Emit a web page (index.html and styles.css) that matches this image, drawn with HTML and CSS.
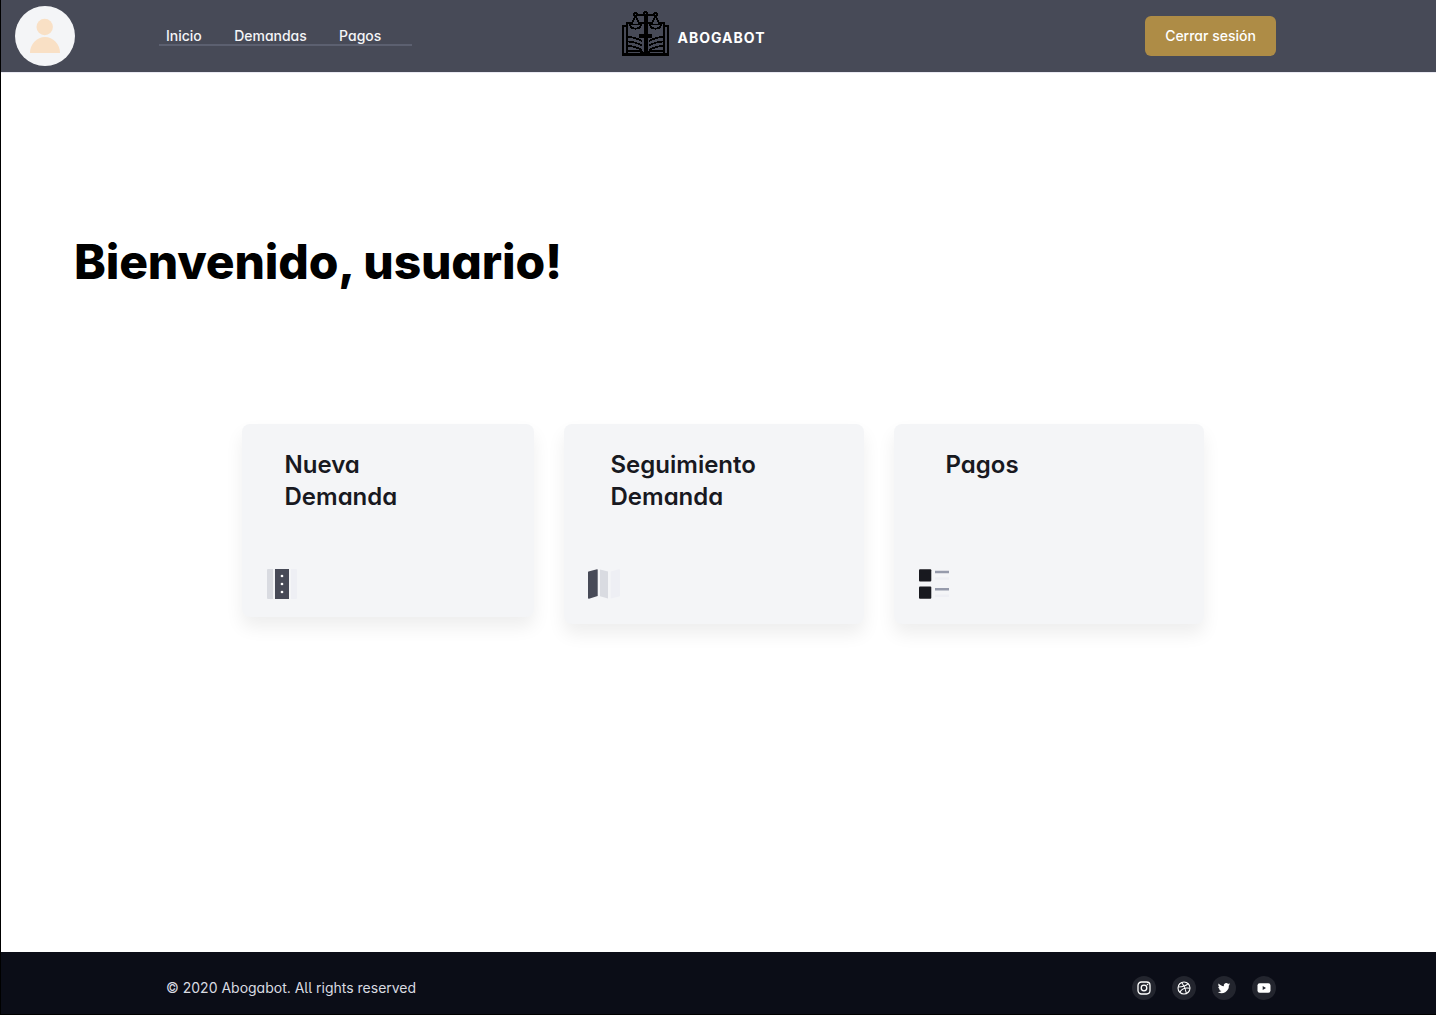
FILE: index.html
```html
<!DOCTYPE html>
<html lang="es">
<head>
<meta charset="utf-8">
<title>Abogabot</title>
<link rel="stylesheet" href="styles.css">
</head>
<body>
<div class="page">
  <header class="topbar">
    <div class="avatar">
      <svg width="60" height="60" viewBox="0 0 60 60" fill="#f9e0c5"><circle cx="29.700" cy="21" r="8.200"/><path d="M15 47a15 16 0 0 1 30 0z"/></svg>
    </div>
    <nav class="nav">
      <a class="nav-link">Inicio</a>
      <a class="nav-link">Demandas</a>
      <a class="nav-link">Pagos</a>
    </nav>
    <div class="brand">
      <svg class="brand-logo" width="48" height="46" viewBox="0 0 48 46" fill="none" stroke="#000" stroke-width="1.600" shape-rendering="crispEdges">
        <path d="M5 15H1V44H46V15H42" stroke-width="2"/>
        <path d="M0 43.500H47" stroke-width="3"/>
        <path d="M5 42V12H9M42 42V12H38M18 12H29" stroke-width="2"/>
        <path d="M5 40.500C12 39 19 39.500 23.500 43C28 39.500 35 39 42 40.500" stroke-width="2"/>
        <path d="M23.500 4V43" stroke-width="4"/>
        <path d="M17 25H30" stroke-width="4"/>
        <path d="M14 4H33" stroke-width="2"/>
        <g fill="#000" stroke="none"><circle cx="13.500" cy="3.500" r="2.500"/><circle cx="33.500" cy="3.500" r="2.500"/><circle cx="23.500" cy="3" r="3"/></g>
        <path d="M13 3H14V4H13ZM33 3H34V4H33ZM23 2H24V3H23Z" fill="#474a57" stroke="none"/>
        <path d="M13.500 5L9.500 13M13.500 5L17.500 13M33.500 5L29.500 13M33.500 5L37.500 13"/>
        <path d="M8 13.500H19C18.500 19 8.500 19 8 13.500ZM28 13.500H39C38.500 19 28.500 19 28 13.500Z" stroke-width="1.800"/>
        <path d="M6 26C12 26 16 28 20 30M6 30.500C12 30.500 16 32.500 20 34.500M6 35C12 35 16 37 20 39M41 26C35 26 31 28 27 30M41 30.500C35 30.500 31 32.500 27 34.500M41 35C35 35 31 37 27 39" stroke-width="1.800"/>
      </svg>
      <span class="brand-name">ABOGABOT</span>
    </div>
    <button class="logout">Cerrar sesión</button>
  </header>

  <main class="main">
    <h1 class="title">Bienvenido, usuario!</h1>
    <section class="cards">
      <article class="card card-new">
        <h2 class="card-title">Nueva<br>Demanda</h2>
        <svg class="card-icon" width="32" height="32" viewBox="0 0 32 32">
          <path d="M2 1H7V31H2Q1 31 1 30V2Q1 1 2 1Z" fill="#d9dbe1"/>
          <path d="M9 1H23V31H9Z" fill="#474a57"/>
          <path d="M25 1H30Q31 1 31 2V30Q31 31 30 31H25Z" fill="#eeeff4"/>
          <circle cx="16" cy="8" r="1.350" fill="#fff"/><circle cx="16" cy="16" r="1.350" fill="#fff"/><circle cx="16" cy="24" r="1.350" fill="#fff"/>
        </svg>
      </article>
      <article class="card card-track">
        <h2 class="card-title">Seguimiento<br>Demanda</h2>
        <svg class="card-icon" width="32" height="32" viewBox="0 0 32 32">
          <path d="M0 4Q0 3.500 .5 3.400L9 1.200Q9.700 1 9.700 1.700V28L1 30.800Q0 31 0 30Z" fill="#474a57"/>
          <path d="M12 1.500L20 3.500V30.500L12 28.300Z" fill="#d9dbe1"/>
          <path d="M22.700 3.500L31 1.200Q32 1 32 2V27.500Q32 28.200 31.300 28.400L22.700 30.500Z" fill="#eeeff4"/>
        </svg>
      </article>
      <article class="card card-pay">
        <h2 class="card-title">Pagos</h2>
        <svg class="card-icon" width="32" height="32" viewBox="0 0 32 32">
          <rect x="1" y="1.200" width="12.300" height="12.200" rx="1" fill="#18191f"/><rect x="1" y="18.600" width="12.300" height="12.200" rx="1" fill="#18191f"/>
          <path d="M17 4H31M17 21.300H31" stroke="#969bab" stroke-width="2.600"/>
          <path d="M17 10.500H31M17 27.800H31" stroke="#eeeff4" stroke-width="2.600"/>
        </svg>
      </article>
    </section>
  </main>

  <footer class="footer">
    <p class="copyright">© 2020 Abogabot. All rights reserved</p>
    <div class="socials">
      <a class="social"><svg width="14" height="14" viewBox="0 0 14 14" fill="none" stroke="#fff" stroke-width="1.300"><rect x="1" y="1" width="12" height="12" rx="3.400"/><circle cx="7" cy="7" r="2.800"/><circle cx="10.500" cy="3.500" r=".8" fill="#fff" stroke="none"/></svg></a>
      <a class="social"><svg width="14" height="14" viewBox="0 0 14 14" fill="none" stroke="#fff" stroke-width="1.100"><circle cx="7" cy="7" r="6"/><path d="M4.700 1.500C7 4.300 8.600 7.600 9.400 12.400M1.100 6C5.500 6 9 5.200 11.100 2.700M2.900 11.300C4.700 7.800 8.300 6.300 12.900 7.300"/></svg></a>
      <a class="social"><svg width="14" height="14" viewBox="0 0 24 24" fill="#fff"><path d="M22.500 5.600c-.8.350-1.600.6-2.500.7.900-.55 1.600-1.400 1.900-2.400-.85.500-1.800.86-2.750 1.050A4.340 4.340 0 0 0 11.700 8.900C8.100 8.700 4.900 7 2.800 4.400c-1.100 2-.6 4.500 1.300 5.800-.7 0-1.400-.2-2-.55 0 2 1.400 3.900 3.500 4.300-.6.170-1.300.2-1.950.07.550 1.750 2.150 2.950 4.050 3A8.700 8.700 0 0 1 1.300 18.800 12.300 12.300 0 0 0 20.300 7.850c.85-.6 1.600-1.350 2.200-2.250z"/></svg></a>
      <a class="social"><svg width="14" height="14" viewBox="0 0 14 14"><rect x=".5" y="2.200" width="13" height="9.600" rx="2.200" fill="#fff"/><path d="M5.700 5V9L9 7z" fill="#23252f"/></svg></a>
    </div>
  </footer>
</div>
</body>
</html>
```

FILE: styles.css
```css
* { box-sizing: border-box; }

body {
  margin: 0;
  background: #fff;
  font-family: Inter, "Liberation Sans", sans-serif;
  font-feature-settings: "cv11", "cv05";
}

.page {
  display: flex;
  flex-direction: column;
  width: 1436px;
  height: 1015px;
  border-left: 1px solid #000;
  border-bottom: 1px solid #000;
  overflow: hidden;
}

.topbar {
  display: flex;
  align-items: center;
  flex: none;
  height: 73px;
  padding: 0 160px 0 14px;
  background: #474a57;
  border-bottom: 1px solid #e9e9f2;
}

.avatar {
  width: 60px;
  height: 60px;
  border-radius: 50%;
  background: #f4f5f7;
}

.avatar svg { display: block; }

.nav {
  display: flex;
  gap: 32.3px;
  width: 253px;
  height: 20px;
  margin: 0 0 0 84px;
  padding-left: 7px;
  border-bottom: 2px solid #5c6070;
}

.nav-link {
  color: #f4f5f7;
  font-size: 14px;
  line-height: 20px;
  font-weight: 500;
}

.brand {
  display: flex;
  align-items: center;
  gap: 7.5px;
  margin-left: 210px;
}

.brand-logo { display: block; margin-top: -4px; }

.brand-name {
  color: #fff;
  font-size: 14px;
  font-weight: 700;
  line-height: 20px;
  letter-spacing: 1px;
  margin-top: 4px;
}

.logout {
  width: 131px;
  height: 40px;
  margin-left: auto;
  padding: 0;
  border: 0;
  border-radius: 6px;
  background: #ae8c46;
  color: #fff;
  font: 500 14px/20px Inter, "Liberation Sans", sans-serif;
  font-feature-settings: inherit;
}

.main { flex: 1; }

.title {
  margin: 157px 0 0 73px;
  font-size: 48px;
  line-height: 64px;
  font-weight: 800;
  letter-spacing: -.16px;
  color: #000;
}

.cards {
  display: flex;
  align-items: flex-start;
  gap: 30px;
  margin: 130px 0 0 241px;
}

.card {
  display: flex;
  flex-direction: column;
  justify-content: space-between;
  border-radius: 8px;
  background: #f4f5f7;
  box-shadow: 0 10px 18px rgba(0, 0, 0, .07);
}

.card-new { width: 292px; height: 193px; padding: 25px 24px 17px; }
.card-track { width: 300px; height: 200px; padding: 25px 24px 24px; }
.card-pay { width: 310px; height: 200px; padding: 25px 24px 24px; }

.card-title {
  margin: 0;
  padding-left: 18.5px;
  color: #18191f;
  font-size: 24px;
  line-height: 32px;
  font-weight: 600;
}

.card-track .card-title { padding-left: 22.5px; }
.card-pay .card-title { padding-left: 27.5px; }

.card-icon { display: block; }

.footer {
  display: flex;
  align-items: center;
  justify-content: space-between;
  flex: none;
  height: 62px;
  padding: 10px 160px 0 165px;
  background: #0b0d17;
}

.copyright {
  margin: 0;
  color: #d9dbe1;
  font-size: 14px;
  line-height: 20px;
}

.socials { display: flex; gap: 16px; }

.social {
  display: flex;
  align-items: center;
  justify-content: center;
  width: 24px;
  height: 24px;
  border-radius: 50%;
  background: #23252e;
}
```
